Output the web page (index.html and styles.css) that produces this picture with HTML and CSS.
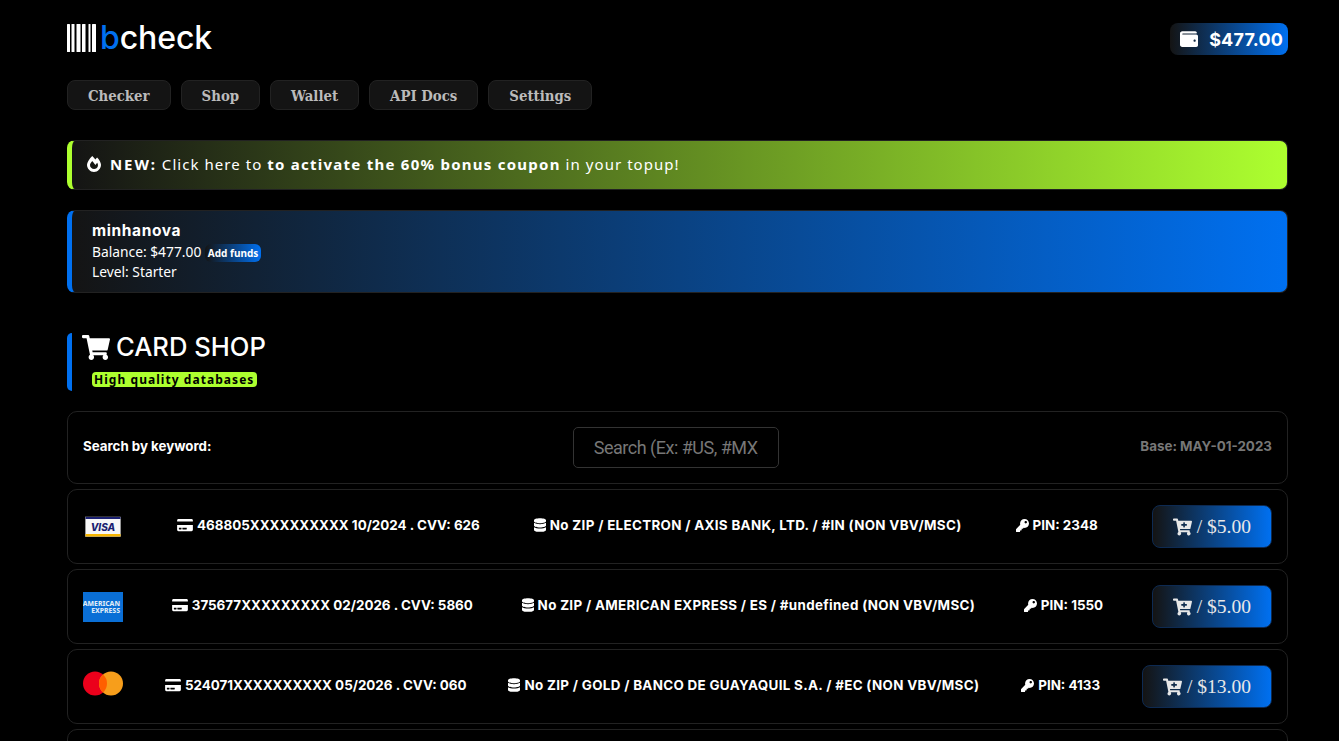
FILE: index.html
```html
<!DOCTYPE html>
<html lang="en">
<head>
    <meta charset="UTF-8">
    <meta name="viewport" content="width=device-width, initial-scale=1.0">
    <title>bcheck</title>
    <link rel="stylesheet" href="styles.css">
</head>
<body>
    <svg class="icon-defs" width="0" height="0">
        <symbol id="i-wallet" viewBox="0 0 512 512"><path d="M461.2 128H80c-8.84 0-16-7.16-16-16s7.16-16 16-16h384c8.84 0 16-7.16 16-16 0-26.51-21.49-48-48-48H64C28.65 32 0 60.65 0 96v320c0 35.35 28.65 64 64 64h397.2c28.02 0 50.8-21.53 50.8-48V176c0-26.47-22.78-48-50.8-48zM416 336c-17.67 0-32-14.33-32-32s14.33-32 32-32 32 14.33 32 32-14.33 32-32 32z"/></symbol>
        <symbol id="i-fire" viewBox="0 0 448 512"><path d="M323.56 51.2c-20.8 19.3-39.58 39.59-56.22 59.97C240.08 73.62 206.28 35.53 168 0 69.74 91.17 0 209.96 0 281.6 0 408.85 100.29 512 224 512s224-103.15 224-230.4c0-53.27-51.98-163.14-124.44-230.4zm-19.47 340.65C282.43 407.01 255.72 416 226.86 416 154.71 416 96 368.26 96 290.75c0-38.61 24.31-72.63 72.79-130.75 6.93 7.98 98.83 125.34 98.83 125.34l58.63-66.88c4.14 6.85 7.91 13.55 11.27 19.97 27.35 52.19 15.81 118.97-33.43 153.42z"/></symbol>
        <symbol id="i-cart" viewBox="0 0 576 512"><path d="M528.12 301.319l47.273-208C578.806 78.301 567.391 64 551.99 64H159.208l-9.166-44.81C147.758 8.021 137.93 0 126.529 0H24C10.745 0 0 10.745 0 24v16c0 13.255 10.745 24 24 24h69.883l70.248 343.435C147.325 417.1 136 435.222 136 456c0 30.928 25.072 56 56 56s56-25.072 56-56c0-15.674-6.447-29.835-16.824-40h209.647C430.447 426.165 424 440.326 424 456c0 30.928 25.072 56 56 56s56-25.072 56-56c0-22.172-12.888-41.332-31.579-50.405l5.517-24.276c3.413-15.018-8.002-29.319-23.403-29.319H218.117l-6.545-32h293.145c11.206 0 20.92-7.754 23.403-18.681z"/></symbol>
        <symbol id="i-cart-plus" viewBox="0 0 576 512"><path d="M504.717 320H211.572l6.545 32h268.418c15.401 0 26.816 14.301 23.403 29.319l-5.517 24.276C523.112 414.668 536 433.828 536 456c0 31.202-25.519 56.444-56.824 55.994-29.823-.429-54.35-24.631-55.155-54.447-.44-16.287 6.085-31.049 16.803-41.548H231.176C241.553 426.165 248 440.326 248 456c0 31.813-26.528 57.431-58.67 55.938-28.54-1.325-51.751-24.385-53.251-52.917-1.158-22.034 10.436-41.455 28.051-51.586L93.883 64H24C10.745 64 0 53.255 0 40V24C0 10.745 10.745 0 24 0h102.529c11.401 0 21.228 8.021 23.513 19.19L159.208 64H551.99c15.401 0 26.816 14.301 23.403 29.319l-47.273 208C525.637 312.246 515.923 320 504.717 320zM408 168h-48v-40c0-8.837-7.163-16-16-16h-16c-8.837 0-16 7.163-16 16v40h-48c-8.837 0-16 7.163-16 16v16c0 8.837 7.163 16 16 16h48v40c0 8.837 7.163 16 16 16h16c8.837 0 16-7.163 16-16v-40h48c8.837 0 16-7.163 16-16v-16c0-8.837-7.163-16-16-16z"/></symbol>
        <symbol id="i-card" viewBox="0 0 576 512"><path d="M0 432c0 26.5 21.5 48 48 48h480c26.5 0 48-21.5 48-48V256H0v176zm192-68c0-6.6 5.4-12 12-12h136c6.6 0 12 5.4 12 12v40c0 6.6-5.4 12-12 12H204c-6.6 0-12-5.4-12-12v-40zm-128 0c0-6.6 5.4-12 12-12h72c6.6 0 12 5.4 12 12v40c0 6.6-5.4 12-12 12H76c-6.6 0-12-5.4-12-12v-40zM576 80v48H0V80c0-26.5 21.5-48 48-48h480c26.5 0 48 21.5 48 48z"/></symbol>
        <symbol id="i-db" viewBox="0 0 448 512"><path d="M448 73.143v45.714C448 159.143 347.667 192 224 192S0 159.143 0 118.857V73.143C0 32.857 100.333 0 224 0s224 32.857 224 73.143zM448 176v102.857C448 319.143 347.667 352 224 352S0 319.143 0 278.857V176c48.125 33.143 136.208 48.572 224 48.572S399.874 209.143 448 176zm0 160v102.857C448 479.143 347.667 512 224 512S0 479.143 0 438.857V336c48.125 33.143 136.208 48.572 224 48.572S399.874 369.143 448 336z"/></symbol>
        <symbol id="i-key" viewBox="0 0 512 512"><path d="M512 176.001C512 273.203 433.202 352 336 352c-11.22 0-22.19-1.062-32.827-3.069l-24.012 27.014A23.999 23.999 0 0 1 261.223 384H224v40c0 13.255-10.745 24-24 24h-40v40c0 13.255-10.745 24-24 24H24c-13.255 0-24-10.745-24-24v-78.059c0-6.365 2.529-12.47 7.029-16.971l161.802-161.802C163.108 213.814 160 195.271 160 176 160 78.798 238.797.001 335.999 0 433.488-.001 512 78.511 512 176.001zM336 128c0 26.51 21.49 48 48 48s48-21.49 48-48-21.49-48-48-48-48 21.49-48 48z"/></symbol>
    </svg>

    <div class="page">
        <header>
            <a class="logo" href="#">
                <svg class="logo-bars" viewBox="0 0 30 28" width="30" height="28">
                    <rect x="0" y="0" width="3" height="28" rx=".5"/>
                    <rect x="4.5" y="0" width="3" height="28" rx=".5"/>
                    <rect x="9.5" y="0" width="4" height="28" rx=".5"/>
                    <rect x="15" y="0" width="3.5" height="28" rx=".5"/>
                    <rect x="21.5" y="0" width="2" height="28" rx=".5"/>
                    <rect x="25" y="0" width="4" height="28" rx=".5"/>
                </svg>
                <span class="logo-text"><span class="logo-b">b</span>check</span>
            </a>
            <a class="wallet" href="#"><svg class="icon"><use href="#i-wallet"/></svg>$477.00</a>
        </header>

        <nav>
            <ul>
                <li><a href="#">Checker</a></li>
                <li><a href="#">Shop</a></li>
                <li><a href="#">Wallet</a></li>
                <li><a href="#">API Docs</a></li>
                <li><a href="#">Settings</a></li>
            </ul>
        </nav>

        <a class="promo" href="#">
            <svg class="icon"><use href="#i-fire"/></svg>
            <span><b>NEW:</b> Click here to <b>to activate the 60% bonus coupon</b> in your topup!</span>
        </a>

        <section class="account">
            <h3>minhanova</h3>
            <p>Balance: $477.00 <a class="add-funds" href="#">Add funds</a></p>
            <p>Level: Starter</p>
        </section>

        <section class="shop-title">
            <h2><svg class="icon"><use href="#i-cart"/></svg>CARD SHOP</h2>
            <span class="tag">High quality databases</span>
        </section>

        <div class="panel search-panel">
            <label for="search">Search by keyword:</label>
            <input type="text" id="search" placeholder="Search (Ex: #US, #MX, #BR...)">
            <span class="base">Base: MAY-01-2023</span>
        </div>

        <div class="panel row">
            <svg class="brand" viewBox="0 0 40 40" width="40" height="40">
                <rect x="2.5" y="10" width="35" height="19.5" fill="#f7f7f7" stroke="#aaa" stroke-width=".6"/>
                <rect x="2.5" y="10" width="35" height="2" fill="#1a1f71"/>
                <rect x="2.5" y="27" width="35" height="2.5" fill="#f7b600"/>
                <text x="20" y="24" text-anchor="middle" class="visa-text">VISA</text>
            </svg>
            <span class="info"><svg class="icon icon-card"><use href="#i-card"/></svg>468805XXXXXXXXXX 10/2024 . CVV: 626</span>
            <span class="info info-bin"><svg class="icon icon-db"><use href="#i-db"/></svg>No ZIP / ELECTRON / AXIS BANK, LTD. / #IN (NON VBV/MSC)</span>
            <span class="info"><svg class="icon icon-key"><use href="#i-key"/></svg>PIN: 2348</span>
            <button class="buy"><svg class="icon"><use href="#i-cart-plus"/></svg> / $5.00</button>
        </div>

        <div class="panel row">
            <svg class="brand" viewBox="0 0 40 40" width="40" height="40">
                <rect x="0" y="5" width="40" height="30" fill="#0a6fd6"/>
                <text x="37" y="18.5" text-anchor="end" class="amex-text">AMERICAN</text>
                <text x="37" y="25.5" text-anchor="end" class="amex-text">EXPRESS</text>
            </svg>
            <span class="info"><svg class="icon icon-card"><use href="#i-card"/></svg>375677XXXXXXXXX 02/2026 . CVV: 5860</span>
            <span class="info info-bin"><svg class="icon icon-db"><use href="#i-db"/></svg>No ZIP / AMERICAN EXPRESS / ES / #undefined (NON VBV/MSC)</span>
            <span class="info"><svg class="icon icon-key"><use href="#i-key"/></svg>PIN: 1550</span>
            <button class="buy"><svg class="icon"><use href="#i-cart-plus"/></svg> / $5.00</button>
        </div>

        <div class="panel row">
            <svg class="brand" viewBox="0 0 40 40" width="40" height="40">
                <circle cx="12" cy="16.5" r="12" fill="#eb001b"/>
                <circle cx="28" cy="16.5" r="12" fill="#f79e1b"/>
                <path d="M20 7.56a12 12 0 0 1 0 17.88a12 12 0 0 1 0-17.88z" fill="#ff5f00"/>
            </svg>
            <span class="info"><svg class="icon icon-card"><use href="#i-card"/></svg>524071XXXXXXXXXX 05/2026 . CVV: 060</span>
            <span class="info info-bin"><svg class="icon icon-db"><use href="#i-db"/></svg>No ZIP / GOLD / BANCO DE GUAYAQUIL S.A. / #EC (NON VBV/MSC)</span>
            <span class="info"><svg class="icon icon-key"><use href="#i-key"/></svg>PIN: 4133</span>
            <button class="buy"><svg class="icon"><use href="#i-cart-plus"/></svg> / $13.00</button>
        </div>

        <div class="panel row"></div>
    </div>
</body>
</html>
```

FILE: styles.css
```css
* {
    margin: 0;
    padding: 0;
    box-sizing: border-box;
}

html, body {
    height: 741px;
    overflow: hidden;
}

body {
    font-family: 'Noto Sans', sans-serif;
    background-color: #000;
    color: #fff;
}

a {
    color: inherit;
    text-decoration: none;
}

.icon-defs {
    position: absolute;
}

.icon {
    fill: currentColor;
    flex: none;
}

.page {
    width: 1221px;
    margin-left: 67px;
}

header {
    display: flex;
    justify-content: space-between;
    align-items: center;
    height: 78px;
    margin-bottom: 2px;
}

.logo {
    display: flex;
    align-items: center;
    gap: 3px;
    margin-bottom: 2px;
}

.logo-bars {
    fill: #fff;
}

.logo-text {
    font-family: 'Inter', sans-serif;
    font-size: 32px;
    font-weight: 500;
    line-height: 28px;
    letter-spacing: -0.1px;
}

.logo-b {
    color: #0070f0;
}

.wallet {
    display: flex;
    align-items: center;
    gap: 11px;
    height: 32px;
    padding: 0 5px 0 10px;
    border-radius: 8px;
    background: linear-gradient(90deg, #141414, #0070f0);
    font-family: 'Inter', sans-serif;
    font-size: 18px;
    font-weight: 700;
    letter-spacing: 0.15px;
}

.wallet .icon {
    width: 18px;
    height: 18px;
}

nav ul {
    list-style: none;
    display: flex;
    gap: 10px;
}

nav ul li a {
    display: block;
    height: 30px;
    padding: 0 20px;
    border: 1px solid #222;
    border-radius: 8px;
    background-color: #141414;
    color: #bbb;
    font-family: 'DejaVu Serif', serif;
    font-stretch: condensed;
    font-size: 14.8px;
    font-weight: bold;
    line-height: 29px;
}

.promo {
    display: flex;
    align-items: center;
    gap: 9px;
    height: 50px;
    margin-top: 30px;
    padding: 0 0 3px 15px;
    border: 1px solid #222;
    border-left: 5px solid #adff2f;
    border-radius: 8px;
    background: linear-gradient(90deg, #141414, #adff2f);
    font-size: 15px;
    letter-spacing: 1.05px;
}

.promo b {
    letter-spacing: 1.25px;
}

.promo b:first-child {
    letter-spacing: 1.9px;
}

.promo .icon {
    width: 14px;
    height: 16px;
}

.account {
    height: 83px;
    margin-top: 20px;
    padding: 10px 20px;
    border: 1px solid #222;
    border-left: 5px solid #0070f0;
    border-radius: 8px;
    background: linear-gradient(90deg, #141414, #0070f0);
    font-size: 13.8px;
    line-height: 20.5px;
}

.account h3 {
    font-family: 'Inter', sans-serif;
    font-size: 15.5px;
    font-weight: 700;
    letter-spacing: 0.6px;
}

.add-funds {
    display: inline-block;
    padding: 0 3px;
    border-radius: 6px;
    background: linear-gradient(90deg, #141414, #0070f0);
    font-size: 10px;
    font-weight: bold;
    line-height: 18px;
}

.shop-title {
    height: 58px;
    margin-top: 40px;
    padding-left: 10px;
    border-left: 5px solid #0070f0;
    border-radius: 5px;
}

.shop-title h2 {
    display: flex;
    align-items: center;
    gap: 6px;
    font-family: 'Inter', sans-serif;
    font-size: 25.6px;
    font-weight: 500;
    line-height: 28px;
}

.shop-title h2 .icon {
    width: 28px;
    height: 25px;
}

.tag {
    display: inline-block;
    margin-top: 11px;
    margin-left: 10px;
    padding: 0 3px 0 2px;
    border-radius: 4px;
    background-color: #adff2f;
    color: #000;
    font-size: 12px;
    font-weight: bold;
    letter-spacing: 1.05px;
    line-height: 15px;
}

.panel {
    display: flex;
    justify-content: space-between;
    align-items: center;
    height: 75px;
    margin-top: 5px;
    padding: 0 15px;
    border: 1px solid #222;
    border-radius: 10px;
    font-family: 'Inter', sans-serif;
    font-size: 13.4px;
    font-weight: 700;
}

.search-panel {
    height: 73px;
    margin-top: 20px;
}

.search-panel label {
    font-size: 13.3px;
}

.search-panel label,
.base,
.info {
    padding-bottom: 3px;
}

.search-panel input {
    width: 206px;
    height: 41px;
    padding: 0 20px;
    border: 1px solid #333;
    border-radius: 5px;
    outline: none;
    background-color: #000;
    color: #fff;
    font-family: 'Roboto', sans-serif;
    font-size: 18px;
    letter-spacing: -0.5px;
}

.search-panel input::placeholder {
    color: #777;
}

.base {
    color: #777;
}

.info {
    display: flex;
    align-items: center;
    gap: 4px;
}

.info-bin {
    letter-spacing: 0.32px;
}

.info .icon-card {
    width: 16px;
    height: 14px;
}

.info .icon-db {
    width: 12px;
    height: 14px;
}

.info .icon-key {
    width: 13px;
    height: 13px;
}

.brand {
    flex: none;
}

.visa-text {
    fill: #1a1f71;
    font-size: 10px;
    font-weight: 800;
    font-style: italic;
}

.amex-text {
    fill: #dfeaf7;
    font-family: 'Noto Sans', sans-serif;
    font-size: 6.8px;
    font-weight: 800;
}

.buy {
    display: flex;
    align-items: center;
    justify-content: center;
    gap: 5px;
    height: 43px;
    padding: 0 20px;
    border: 1px solid #0d2a52;
    border-radius: 8px;
    background: linear-gradient(90deg, #141414, #0070f0);
    color: #e8e8e8;
    font-family: 'Liberation Serif', serif;
    font-size: 19.5px;
}

.buy .icon {
    width: 19px;
    height: 18px;
}
```
